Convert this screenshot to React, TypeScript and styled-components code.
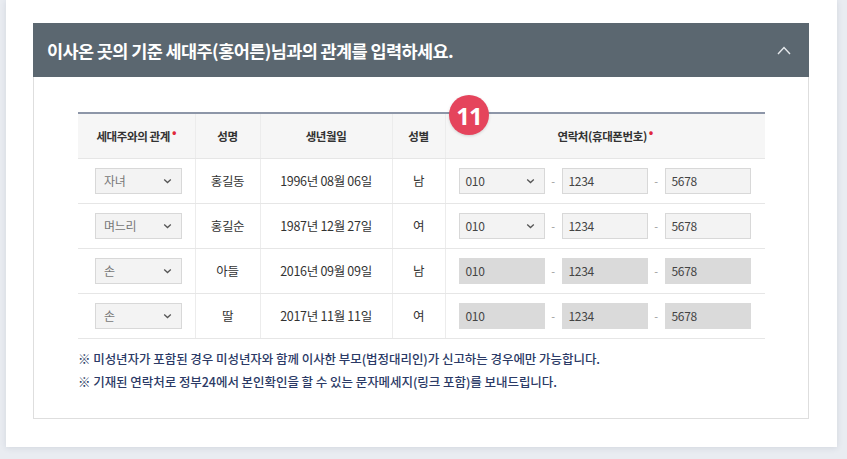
import React from "react";
import styled, { createGlobalStyle } from "styled-components";

const Global = createGlobalStyle`
  html, body { margin: 0; padding: 0; background: #e9ecf1; }
  body { font-family: "Noto Sans CJK KR", "Noto Sans", sans-serif; }
  * { box-sizing: border-box; }
`;

const Page = styled.div`
  width: 847px;
  height: 459px;
  overflow: hidden;
  padding-left: 6px;
`;

const Card = styled.div`
  width: 831px;
  height: 447px;
  background: #fff;
  box-shadow: 0 1px 6px rgba(40, 60, 90, 0.12);
  padding: 23px 0 0 27px;
`;

const Panel = styled.section`
  width: 776px;
`;

const PanelHeader = styled.header`
  height: 54px;
  background: #5b6770;
  display: flex;
  align-items: center;
  justify-content: space-between;
  padding: 0 18px 0 14px;
`;

const Title = styled.h2`
  margin: 0;
  color: #fff;
  font-size: 17.5px;
  font-weight: 700;
  letter-spacing: -0.6px;
`;

const PanelBody = styled.div`
  height: 342px;
  border: 1px solid #dedede;
  border-top: none;
  padding: 35px 0 0 44px;
`;

const TableWrap = styled.div`
  position: relative;
  width: 687px;
`;

const Badge = styled.div`
  position: absolute;
  left: 371px;
  top: -17px;
  width: 40px;
  height: 40px;
  border-radius: 50%;
  background: #e5445c;
  color: #fff;
  font-family: "Noto Sans", sans-serif;
  font-weight: 700;
  font-size: 24px;
  letter-spacing: -1px;
  display: flex;
  align-items: center;
  justify-content: center;
  box-shadow: 0 1px 3px rgba(0, 0, 0, 0.15);
`;

const Table = styled.table`
  width: 687px;
  border-collapse: collapse;
  table-layout: fixed;
  border-top: 2px solid #8d96a8;
`;

const Th = styled.th`
  height: 45px;
  background: #f6f6f6;
  font-size: 11.5px;
  font-weight: 700;
  color: #333;
  letter-spacing: -0.4px;
  border-left: 1px solid #ececec;
  border-bottom: 1px solid #e6e6e6;
  &:first-child { border-left: none; }
`;

const Req = styled.span`
  color: #e0283c;
  font-size: 12px;
  position: relative;
  top: -4px;
  margin-left: 2px;
`;

const Td = styled.td`
  height: 45px;
  text-align: center;
  font-size: 12.5px;
  color: #333;
  letter-spacing: -0.3px;
  border-left: 1px solid #ececec;
  border-bottom: 1px solid #e6e6e6;
  &:first-child { border-left: none; }
`;

const SelectBox = styled.div`
  width: 87px;
  height: 26px;
  margin-left: 16px;
  border: 1px solid #d8d8d8;
  background: #f3f3f3;
  display: flex;
  align-items: center;
  justify-content: space-between;
  padding: 0 9px 0 8px;
  font-size: 12px;
  color: #777;
  text-align: left;
`;

const PhoneRow = styled.div`
  display: flex;
  align-items: center;
  padding-left: 12px;
`;

const Field = styled.div<{ $disabled?: boolean }>`
  width: 86px;
  height: 26px;
  border: 1px solid ${(p) => (p.$disabled ? "#dadada" : "#d8d8d8")};
  background: ${(p) => (p.$disabled ? "#dadada" : "#f3f3f3")};
  display: flex;
  align-items: center;
  justify-content: space-between;
  padding: 0 9px 0 6px;
  font-size: 12px;
  color: #444;
`;

const Dash = styled.span`
  width: 17px;
  text-align: center;
  color: #999;
  font-size: 11px;
`;

const Notes = styled.ul`
  list-style: none;
  margin: 8px 0 0 0;
  padding: 0;
`;

const Note = styled.li`
  font-size: 12.5px;
  font-weight: 500;
  color: #2b3a66;
  letter-spacing: -0.05px;
  line-height: 23px;
`;

const Chevron = () => (
  <svg width="9" height="6" viewBox="0 0 9 6">
    <path d="M1.2 1.5 L4.5 4.5 L7.8 1.5" fill="none" stroke="#555" strokeWidth="1.3" />
  </svg>
);

const Up = () => (
  <svg width="14" height="9" viewBox="0 0 14 9">
    <path d="M1 8 L7 1.5 L13 8" fill="none" stroke="#e6e9ec" strokeWidth="1.4" />
  </svg>
);

type Row = { rel: string; name: string; birth: string; sex: string; disabled: boolean };

const rows: Row[] = [
  { rel: "자녀", name: "홍길동", birth: "1996년 08월 06일", sex: "남", disabled: false },
  { rel: "며느리", name: "홍길순", birth: "1987년 12월 27일", sex: "여", disabled: false },
  { rel: "손", name: "아들", birth: "2016년 09월 09일", sex: "남", disabled: true },
  { rel: "손", name: "딸", birth: "2017년 11월 11일", sex: "여", disabled: true },
];

export default function App() {
  return (
    <Page>
      <Global />
      <Card>
        <Panel>
          <PanelHeader>
            <Title>이사온 곳의 기준 세대주(홍어른)님과의 관계를 입력하세요.</Title>
            <Up />
          </PanelHeader>
          <PanelBody>
            <TableWrap>
              <Badge>11</Badge>
              <Table>
                <colgroup>
                  <col style={{ width: 117 }} />
                  <col style={{ width: 65 }} />
                  <col style={{ width: 132 }} />
                  <col style={{ width: 53 }} />
                  <col style={{ width: 320 }} />
                </colgroup>
                <thead>
                  <tr>
                    <Th>
                      세대주와의 관계<Req>•</Req>
                    </Th>
                    <Th>성명</Th>
                    <Th>생년월일</Th>
                    <Th>성별</Th>
                    <Th>
                      연락처(휴대폰번호)<Req>•</Req>
                    </Th>
                  </tr>
                </thead>
                <tbody>
                  {rows.map((r, i) => (
                    <tr key={i}>
                      <Td>
                        <SelectBox>
                          <span>{r.rel}</span>
                          <Chevron />
                        </SelectBox>
                      </Td>
                      <Td>{r.name}</Td>
                      <Td>{r.birth}</Td>
                      <Td>{r.sex}</Td>
                      <Td>
                        <PhoneRow>
                          <Field $disabled={r.disabled}>
                            <span>010</span>
                            {!r.disabled && <Chevron />}
                          </Field>
                          <Dash>-</Dash>
                          <Field $disabled={r.disabled}>1234</Field>
                          <Dash>-</Dash>
                          <Field $disabled={r.disabled}>5678</Field>
                        </PhoneRow>
                      </Td>
                    </tr>
                  ))}
                </tbody>
              </Table>
            </TableWrap>
            <Notes>
              <Note>※ 미성년자가 포함된 경우 미성년자와 함께 이사한 부모(법정대리인)가 신고하는 경우에만 가능합니다.</Note>
              <Note>※ 기재된 연락처로 정부24에서 본인확인을 할 수 있는 문자메세지(링크 포함)를 보내드립니다.</Note>
            </Notes>
          </PanelBody>
        </Panel>
      </Card>
    </Page>
  );
}
